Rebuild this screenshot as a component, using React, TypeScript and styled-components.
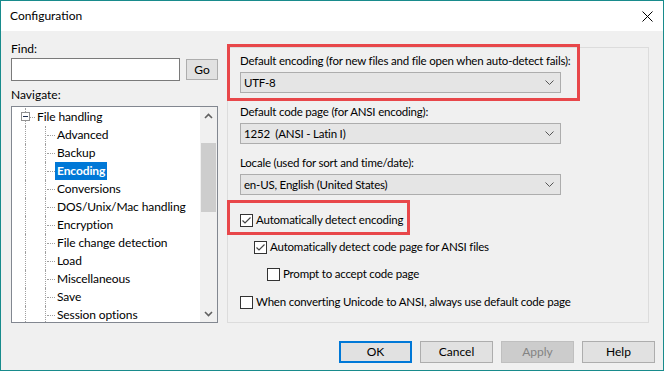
import styled, { createGlobalStyle } from "styled-components"

const GlobalStyle = createGlobalStyle`
    html, body {
        margin: 0;
        padding: 0;
        background: #f0f0f0;
    }
    * {
        box-sizing: border-box;
    }
`

const font = `Lato, "Noto Sans", sans-serif`

const Janela = styled.div`
    width: 664px;
    height: 371px;
    border: 1px solid #188b8c;
    background: #f0f0f0;
    font-family: ${font};
    font-size: 12px;
    color: #000;
    display: flex;
    flex-direction: column;
    overflow: hidden;
`

const BarraTitulo = styled.div`
    height: 30px;
    background: #fff;
    display: flex;
    align-items: center;
    justify-content: space-between;
    padding: 0 10px 0 9px;
`

const Titulo = styled.span`
    font-size: 12px;
    line-height: 16px;
`

const Corpo = styled.div`
    height: 292px;
    display: flex;
    padding-left: 10px;
    gap: 9px;
`

const ColunaEsquerda = styled.div`
    width: 207px;
    padding-top: 10px;
    display: flex;
    flex-direction: column;
`

const Rotulo = styled.div`
    line-height: 16px;
    height: 16px;
    white-space: nowrap;
`

const LinhaBusca = styled.div`
    display: flex;
    align-items: center;
    gap: 6px;
    margin-top: 1px;
    margin-bottom: 6px;
`

const CampoBusca = styled.input`
    width: 169px;
    height: 23px;
    border: 1px solid #7a7a7a;
    background: #fff;
    outline: none;
    padding: 0 3px;
`

const BotaoPequeno = styled.div`
    width: 32px;
    height: 21px;
    background: #e1e1e1;
    border: 1px solid #adadad;
    display: flex;
    align-items: center;
    justify-content: center;
    line-height: 16px;
`

const Arvore = styled.div`
    margin-top: 3px;
    height: 217px;
    border: 1px solid #828790;
    background: #fff;
    display: flex;
    overflow: hidden;
`

const ArvoreConteudo = styled.div`
    flex: 1;
    padding: 1px 0 0 3px;
    overflow: hidden;
    letter-spacing: -0.1px;
`

const LinhaArvore = styled.div`
    height: 18px;
    display: flex;
    align-items: stretch;
`

const Celula = styled.div<{ $horizontal?: boolean; $largura?: number }>`
    width: ${p => p.$largura ?? 20}px;
    flex-shrink: 0;
    position: relative;
    &::before {
        content: "";
        position: absolute;
        left: 10px;
        top: 0;
        bottom: 0;
        border-left: 1px dotted #a0a0a0;
    }
    &::after {
        content: "";
        display: ${p => (p.$horizontal ? "block" : "none")};
        position: absolute;
        left: 12px;
        right: 0;
        top: 9px;
        border-top: 1px dotted #a0a0a0;
    }
`

const Expansor = styled.div`
    position: absolute;
    left: 6px;
    top: 4px;
    width: 9px;
    height: 9px;
    border: 1px solid #919191;
    background: #fff;
    z-index: 1;
    &::after {
        content: "";
        position: absolute;
        left: 1px;
        top: 3px;
        width: 5px;
        height: 1px;
        background: #1f2f4f;
    }
`

const TextoItem = styled.span<{ $selecionado?: boolean }>`
    padding: 0 2px;
    line-height: 18px;
    white-space: nowrap;
    background: ${p => (p.$selecionado ? "#0078d7" : "transparent")};
    color: ${p => (p.$selecionado ? "#fff" : "#000")};
    font-weight: ${p => (p.$selecionado ? 700 : 400)};
`

const BarraRolagem = styled.div`
    width: 17px;
    background: #f0f0f0;
    display: flex;
    flex-direction: column;
`

const SetaRolagem = styled.div`
    height: 17px;
    display: flex;
    align-items: center;
    justify-content: center;
`

const Trilho = styled.div`
    flex: 1;
    padding: 19px 1px 0 1px;
`

const Polegar = styled.div`
    height: 69px;
    background: #cdcdcd;
`

const ColunaDireita = styled.div`
    padding-top: 16px;
`

const Painel = styled.div`
    width: 422px;
    height: 276px;
    border: 1px solid #dcdcdc;
    padding: 5px 0 0 12px;
    display: flex;
    flex-direction: column;
    font-size: 11.5px;
    letter-spacing: -0.2px;
`

const Campo = styled.div<{ $espaco?: number }>`
    margin-top: ${p => p.$espaco ?? 0}px;
    position: relative;
`

const Destaque = styled.div<{ $x: number; $y: number; $w: number; $h: number }>`
    position: absolute;
    left: ${p => p.$x}px;
    top: ${p => p.$y}px;
    width: ${p => p.$w}px;
    height: ${p => p.$h}px;
    border: 3px solid #e8474a;
    pointer-events: none;
`

const Combo = styled.div`
    margin-top: 3px;
    width: 321px;
    height: 21px;
    background: #e5e5e5;
    border: 1px solid #adadad;
    display: flex;
    align-items: center;
    justify-content: space-between;
    padding: 0 6px 0 3px;
    line-height: 16px;
`

const LinhaCheck = styled.div<{ $recuo?: number; $espaco?: number }>`
    position: relative;
    margin-top: ${p => p.$espaco ?? 0}px;
    margin-left: ${p => p.$recuo ?? 0}px;
    height: 16px;
    display: flex;
    align-items: center;
    gap: 3px;
    white-space: nowrap;
    line-height: 16px;
`

const Caixa = styled.div`
    width: 13px;
    height: 13px;
    border: 1px solid #333;
    background: #fff;
    display: flex;
    align-items: center;
    justify-content: center;
`

const Rodape = styled.div`
    display: flex;
    justify-content: flex-end;
    gap: 8px;
    padding: 18px 8px 0 0;
`

const Botao = styled.div<{ $padrao?: boolean; $desabilitado?: boolean }>`
    width: 73px;
    height: 22px;
    display: flex;
    align-items: center;
    justify-content: center;
    line-height: 16px;
    background: ${p => (p.$desabilitado ? "#cccccc" : "#e1e1e1")};
    color: ${p => (p.$desabilitado ? "#838383" : "#000")};
    border: ${p => (p.$padrao ? "2px solid #0078d7" : p.$desabilitado ? "1px solid #bfbfbf" : "1px solid #adadad")};
`

function Chevron() {
    return (
        <svg width="9" height="5" viewBox="0 0 9 5">
            <polyline points="0.5,0.5 4.5,4.5 8.5,0.5" fill="none" stroke="#555" strokeWidth="1" />
        </svg>
    )
}

function Check({ marcado }: { marcado?: boolean }) {
    return (
        <Caixa>
            {marcado && (
                <svg width="11" height="11" viewBox="0 0 11 11">
                    <polyline points="1.5,5.5 4,8 9.5,2.5" fill="none" stroke="#444" strokeWidth="1.2" />
                </svg>
            )}
        </Caixa>
    )
}

const filhos = [
    "Advanced",
    "Backup",
    "Encoding",
    "Conversions",
    "DOS/Unix/Mac handling",
    "Encryption",
    "File change detection",
    "Load",
    "Miscellaneous",
    "Save",
    "Session options",
]

export default function App() {
    return (
        <>
            <GlobalStyle />
            <Janela>
                <BarraTitulo>
                    <Titulo>Configuration</Titulo>
                    <svg width="11" height="11" viewBox="0 0 11 11">
                        <path d="M0.5,0.5 L10.5,10.5 M10.5,0.5 L0.5,10.5" stroke="#000" strokeWidth="1" />
                    </svg>
                </BarraTitulo>
                <Corpo>
                    <ColunaEsquerda>
                        <Rotulo>Find:</Rotulo>
                        <LinhaBusca>
                            <CampoBusca />
                            <BotaoPequeno>Go</BotaoPequeno>
                        </LinhaBusca>
                        <Rotulo>Navigate:</Rotulo>
                        <Arvore>
                            <ArvoreConteudo>
                                <LinhaArvore>
                                    <Celula $horizontal>
                                        <Expansor />
                                    </Celula>
                                    <TextoItem>File handling</TextoItem>
                                </LinhaArvore>
                                {filhos.map(f => (
                                    <LinhaArvore key={f}>
                                        <Celula />
                                        <Celula $horizontal />
                                        <TextoItem $selecionado={f === "Encoding"}>{f}</TextoItem>
                                    </LinhaArvore>
                                ))}
                            </ArvoreConteudo>
                            <BarraRolagem>
                                <SetaRolagem>
                                    <svg width="9" height="6" viewBox="0 0 9 6">
                                        <polyline points="1,5 4.5,1.5 8,5" fill="none" stroke="#606060" strokeWidth="1.6" />
                                    </svg>
                                </SetaRolagem>
                                <Trilho>
                                    <Polegar />
                                </Trilho>
                                <SetaRolagem>
                                    <svg width="9" height="6" viewBox="0 0 9 6">
                                        <polyline points="1,1 4.5,4.5 8,1" fill="none" stroke="#606060" strokeWidth="1.6" />
                                    </svg>
                                </SetaRolagem>
                            </BarraRolagem>
                        </Arvore>
                    </ColunaEsquerda>
                    <ColunaDireita>
                        <Painel>
                            <Campo>
                                <Destaque $x={-13} $y={-9} $w={353} $h={57} />
                                <Rotulo>Default encoding (for new files and file open when auto-detect fails):</Rotulo>
                                <Combo>
                                    <span>UTF-8</span>
                                    <Chevron />
                                </Combo>
                            </Campo>
                            <Campo $espaco={11}>
                                <Rotulo>Default code page (for ANSI encoding):</Rotulo>
                                <Combo>
                                    <span>1252&nbsp;&nbsp;(ANSI - Latin I)</span>
                                    <Chevron />
                                </Combo>
                            </Campo>
                            <Campo $espaco={11}>
                                <Rotulo>Locale (used for sort and time/date):</Rotulo>
                                <Combo>
                                    <span>en-US, English (United States)</span>
                                    <Chevron />
                                </Combo>
                            </Campo>
                            <LinhaCheck $espaco={17}>
                                <Destaque $x={-13} $y={-12} $w={183} $h={35} />
                                <Check marcado />
                                <span>Automatically detect encoding</span>
                            </LinhaCheck>
                            <LinhaCheck $espaco={11} $recuo={14}>
                                <Check marcado />
                                <span>Automatically detect code page for ANSI files</span>
                            </LinhaCheck>
                            <LinhaCheck $espaco={11} $recuo={27}>
                                <Check />
                                <span>Prompt to accept code page</span>
                            </LinhaCheck>
                            <LinhaCheck $espaco={12}>
                                <Check />
                                <span>When converting Unicode to ANSI, always use default code page</span>
                            </LinhaCheck>
                        </Painel>
                    </ColunaDireita>
                </Corpo>
                <Rodape>
                    <Botao $padrao>OK</Botao>
                    <Botao>Cancel</Botao>
                    <Botao $desabilitado>Apply</Botao>
                    <Botao>Help</Botao>
                </Rodape>
            </Janela>
        </>
    )
}
